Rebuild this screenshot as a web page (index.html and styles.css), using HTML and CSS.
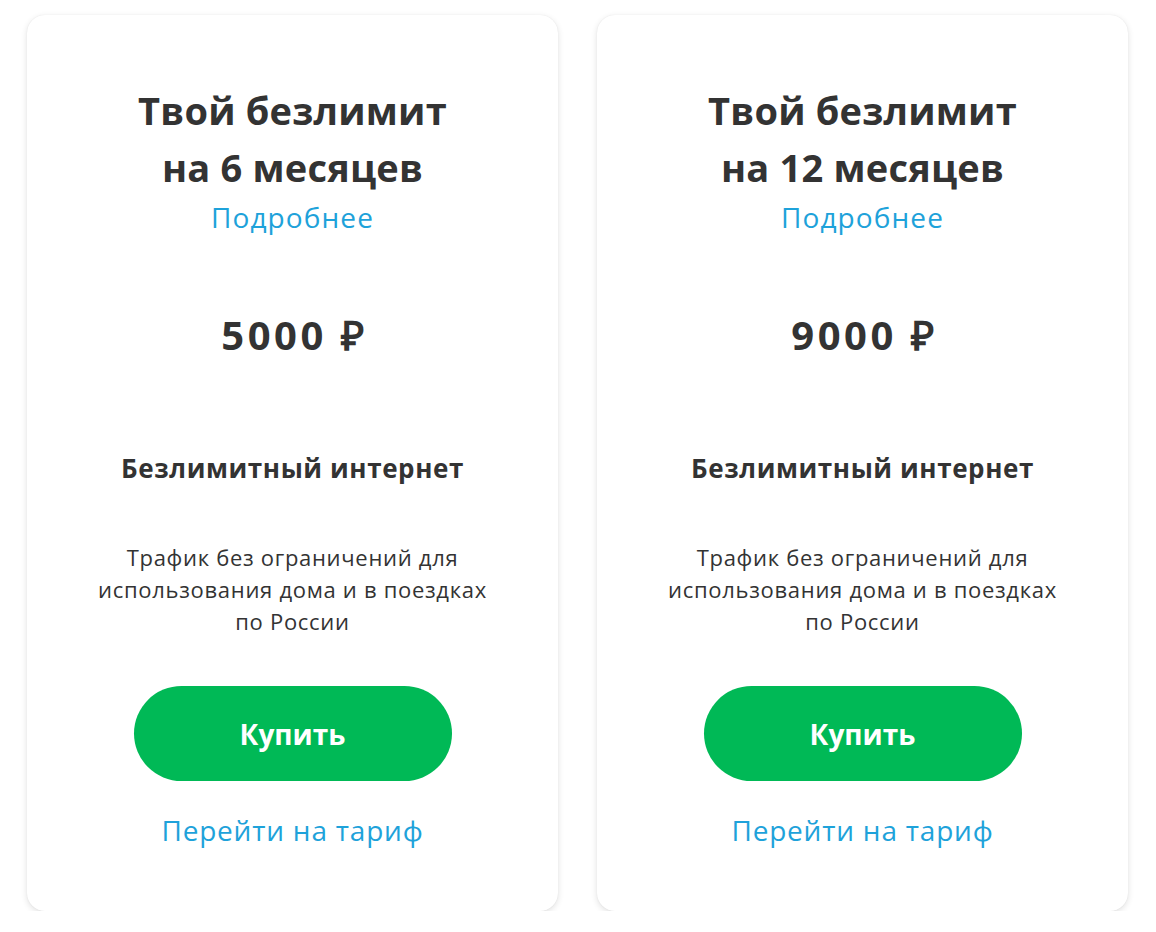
FILE: index.html
```html
<!DOCTYPE html>
<html lang="ru">
<head>
<meta charset="utf-8">
<link rel="stylesheet" href="styles.css">
</head>
<body>
<div class="cards">
  <div class="card">
    <h2 class="title">Твой безлимит<br>на 6 месяцев</h2>
    <a class="more">Подробнее</a>
    <div class="price">5000 ₽</div>
    <div class="feature">Безлимитный интернет</div>
    <p class="desc">Трафик без ограничений для<br>использования дома и в поездках<br>по России</p>
    <button class="buy">Купить</button>
    <a class="switch">Перейти на тариф</a>
  </div>
  <div class="card">
    <h2 class="title">Твой безлимит<br>на 12 месяцев</h2>
    <a class="more">Подробнее</a>
    <div class="price">9000 ₽</div>
    <div class="feature">Безлимитный интернет</div>
    <p class="desc">Трафик без ограничений для<br>использования дома и в поездках<br>по России</p>
    <button class="buy">Купить</button>
    <a class="switch">Перейти на тариф</a>
  </div>
</div>
</body>
</html>
```
FILE: styles.css
```css
html, body {
  margin: 0;
  padding: 0;
  background: #ffffff;
}
body {
  font-family: "Open Sans", "Liberation Sans", sans-serif;
  color: #333333;
}
.cards {
  display: flex;
  gap: 39px;
  padding: 15px 0 0 27px;
}
.card {
  width: 531px;
  height: 896px;
  box-sizing: border-box;
  background: #fff;
  border-radius: 18px;
  box-shadow: 0 2px 6px rgba(0, 0, 0, 0.12), 0 0 1px rgba(0, 0, 0, 0.1);
  display: flex;
  flex-direction: column;
  align-items: center;
  text-align: center;
  padding-top: 67px;
}
.title {
  margin: 0;
  font-size: 38px;
  line-height: 57px;
  font-weight: 700;
  letter-spacing: 0.2px;
}
.more {
  display: block;
  margin-top: 3px;
  font-size: 28px;
  line-height: 36px;
  letter-spacing: 1.1px;
  color: #1ea2da;
}
.price {
  margin-top: 75px;
  font-size: 40px;
  line-height: 50px;
  font-weight: 700;
  letter-spacing: 3.5px;
  padding-left: 3.5px;
}
.feature {
  margin-top: 91px;
  font-size: 26px;
  line-height: 34px;
  font-weight: 700;
  letter-spacing: 0.6px;
}
.desc {
  margin: 56px 0 0;
  font-size: 22px;
  line-height: 32px;
  letter-spacing: 0.7px;
}
.buy {
  margin-top: 49px;
  width: 318px;
  height: 95px;
  border: none;
  border-radius: 48px;
  background: #00b956;
  color: #fff;
  font-family: inherit;
  font-size: 28px;
  font-weight: 700;
}
.switch {
  display: block;
  margin-top: 31px;
  font-size: 28px;
  line-height: 36px;
  letter-spacing: 0.8px;
  color: #1ea2da;
}
```
